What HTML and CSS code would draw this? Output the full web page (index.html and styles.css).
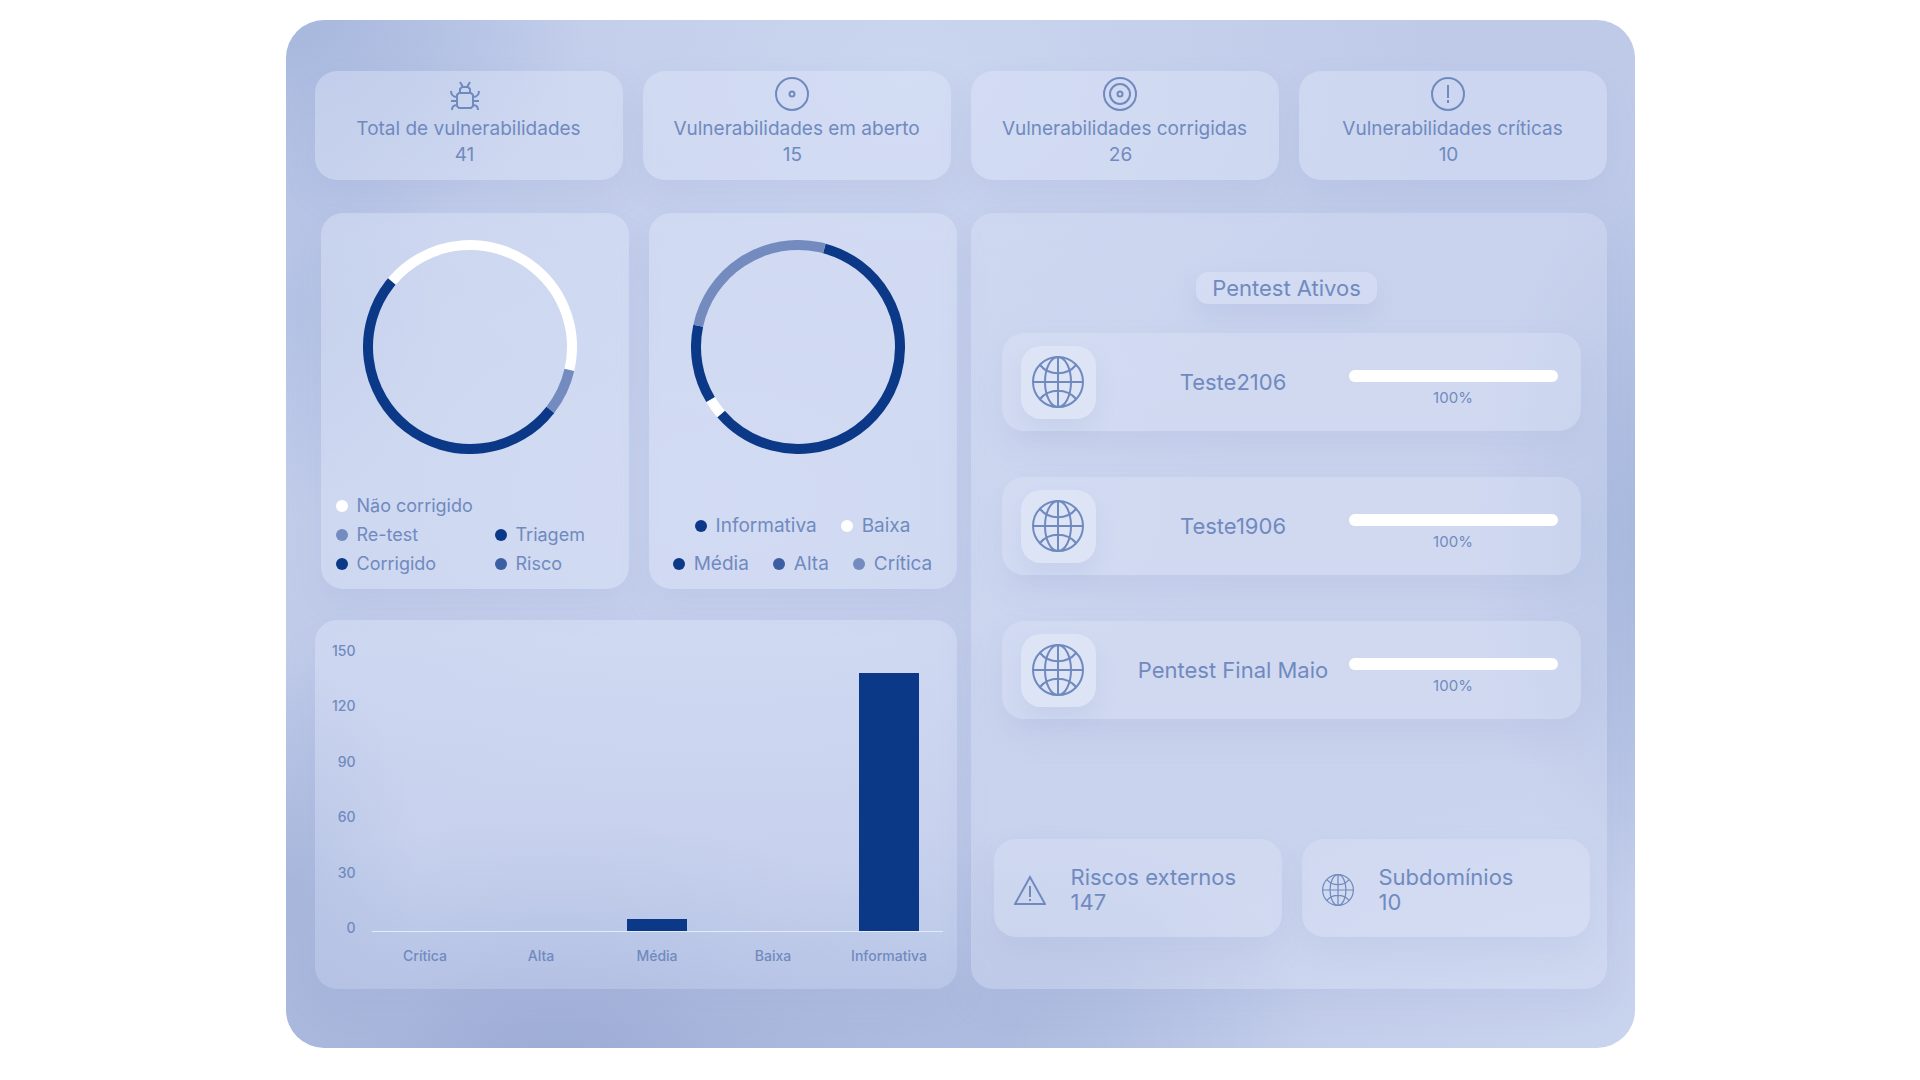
FILE: index.html
```html
<!DOCTYPE html>
<html lang="pt-BR">
<head>
    <meta charset="UTF-8">
    <meta name="viewport" content="width=device-width, initial-scale=1.0">
    <title>Dashboard</title>
    <link rel="stylesheet" href="styles.css">
</head>
<body>
    <svg class="sprite" aria-hidden="true">
        <symbol id="globe" viewBox="0 0 52 52">
            <circle cx="26" cy="26" r="25"/>
            <ellipse cx="26" cy="26" rx="13" ry="25"/>
            <path d="M26 1v50M1 26h50M8 9c9 11 27 11 36 0M8 43c9-11 27-11 36 0"/>
        </symbol>
    </svg>

    <main class="dashboard">
        <section class="stats">
            <div class="card stat">
                <svg class="stat-icon" viewBox="0 0 34 34">
                    <path d="M12 16h12l2 2v11l-2 2H12l-2-2V18zM13 16v-4l2-2h6l2 2v4M16 10l-3-5M20 10l3-5M10 20c-4 0-6-3-6-6M26 20c4 0 6-3 6-6M10 24H4M26 24h6M10 28c-4 0-5 2-5 5M26 28c4 0 5 2 5 5"/>
                </svg>
                <h2>Total de vulnerabilidades</h2>
                <p>41</p>
            </div>
            <div class="card stat">
                <svg class="stat-icon" viewBox="0 0 34 34">
                    <circle cx="17" cy="17" r="16"/>
                    <circle cx="17" cy="17" r="2.5"/>
                </svg>
                <h2>Vulnerabilidades em aberto</h2>
                <p>15</p>
            </div>
            <div class="card stat">
                <svg class="stat-icon" viewBox="0 0 34 34">
                    <circle cx="17" cy="17" r="16"/>
                    <circle cx="17" cy="17" r="10"/>
                    <circle cx="17" cy="17" r="2.5"/>
                </svg>
                <h2>Vulnerabilidades corrigidas</h2>
                <p>26</p>
            </div>
            <div class="card stat">
                <svg class="stat-icon" viewBox="0 0 34 34">
                    <circle cx="17" cy="17" r="16"/>
                    <path d="M17 8v13M17 23v3" stroke-width="2"/>
                </svg>
                <h2>Vulnerabilidades críticas</h2>
                <p>10</p>
            </div>
        </section>

        <div class="content">
            <div class="charts">
                <div class="donuts">
                    <section class="card donut-card">
                        <svg class="donut" viewBox="0 0 214 214">
                            <circle class="seg white" cx="107" cy="107" r="102" pathLength="360" stroke-dasharray="154 206" transform="rotate(-140 107 107)"/>
                            <circle class="seg light" cx="107" cy="107" r="102" pathLength="360" stroke-dasharray="25 335" transform="rotate(13 107 107)"/>
                            <circle class="seg dark" cx="107" cy="107" r="102" pathLength="360" stroke-dasharray="182 178" transform="rotate(38 107 107)"/>
                        </svg>
                        <ul class="legend legend-status">
                            <li class="wide"><span class="dot white"></span>Não corrigido</li>
                            <li><span class="dot light"></span>Re-test</li>
                            <li><span class="dot dark"></span>Triagem</li>
                            <li><span class="dot dark"></span>Corrigido</li>
                            <li><span class="dot medium"></span>Risco</li>
                        </ul>
                    </section>
                    <section class="card donut-card">
                        <svg class="donut" viewBox="0 0 214 214">
                            <circle class="seg dark" cx="107" cy="107" r="102" pathLength="360" stroke-dasharray="214 146" transform="rotate(-75 107 107)"/>
                            <circle class="seg white" cx="107" cy="107" r="102" pathLength="360" stroke-dasharray="10 350" transform="rotate(139 107 107)"/>
                            <circle class="seg dark" cx="107" cy="107" r="102" pathLength="360" stroke-dasharray="43 317" transform="rotate(149 107 107)"/>
                            <circle class="seg light" cx="107" cy="107" r="102" pathLength="360" stroke-dasharray="93 267" transform="rotate(192 107 107)"/>
                        </svg>
                        <div class="legend-group">
                            <ul class="legend legend-row">
                                <li><span class="dot dark"></span>Informativa</li>
                                <li><span class="dot white"></span>Baixa</li>
                            </ul>
                            <ul class="legend legend-row">
                                <li><span class="dot dark"></span>Média</li>
                                <li><span class="dot medium"></span>Alta</li>
                                <li><span class="dot light"></span>Crítica</li>
                            </ul>
                        </div>
                    </section>
                </div>

                <section class="card bar-chart">
                    <div class="y-axis">
                        <span>150</span>
                        <span>120</span>
                        <span>90</span>
                        <span>60</span>
                        <span>30</span>
                        <span>0</span>
                    </div>
                    <div class="plot">
                        <div class="bars">
                            <div class="bar" style="height: 0%"></div>
                            <div class="bar" style="height: 0%"></div>
                            <div class="bar" style="height: 4%"></div>
                            <div class="bar" style="height: 0%"></div>
                            <div class="bar" style="height: 89%"></div>
                        </div>
                        <div class="x-axis">
                            <span>Crítica</span>
                            <span>Alta</span>
                            <span>Média</span>
                            <span>Baixa</span>
                            <span>Informativa</span>
                        </div>
                    </div>
                </section>
            </div>

            <section class="card pentests">
                <h2 class="badge">Pentest Ativos</h2>
                <div class="pentest-list">
                    <article class="card pentest">
                        <div class="tile"><svg class="globe"><use href="#globe"/></svg></div>
                        <h3>Teste2106</h3>
                        <div class="progress">
                            <div class="track"><div class="fill" style="width: 100%"></div></div>
                            <span>100%</span>
                        </div>
                    </article>
                    <article class="card pentest">
                        <div class="tile"><svg class="globe"><use href="#globe"/></svg></div>
                        <h3>Teste1906</h3>
                        <div class="progress">
                            <div class="track"><div class="fill" style="width: 100%"></div></div>
                            <span>100%</span>
                        </div>
                    </article>
                    <article class="card pentest">
                        <div class="tile"><svg class="globe"><use href="#globe"/></svg></div>
                        <h3>Pentest Final Maio</h3>
                        <div class="progress">
                            <div class="track"><div class="fill" style="width: 100%"></div></div>
                            <span>100%</span>
                        </div>
                    </article>
                </div>
                <div class="totals">
                    <div class="card total">
                        <svg class="total-icon" viewBox="0 0 32 32">
                            <path d="M16 3L1 30h30zM16 12v11M16 25v2"/>
                        </svg>
                        <div>
                            <h3>Riscos externos</h3>
                            <p>147</p>
                        </div>
                    </div>
                    <div class="card total">
                        <svg class="total-icon"><use href="#globe"/></svg>
                        <div>
                            <h3>Subdomínios</h3>
                            <p>10</p>
                        </div>
                    </div>
                </div>
            </section>
        </div>
    </main>
</body>
</html>
```

FILE: styles.css
```css
* {
    margin: 0;
    padding: 0;
    box-sizing: border-box;
}

body {
    font-family: Inter, "Liberation Sans", sans-serif;
    background: #fff;
    color: #708abf;
    padding: 20px;
}

h2,
h3 {
    font-weight: 400;
}

svg {
    fill: none;
    stroke: #708abf;
    stroke-width: 2;
    flex-shrink: 0;
}

.sprite {
    display: none;
}

.dashboard {
    max-width: 1349px;
    margin: 0 auto;
    padding: 51px 28px 59px 29px;
    border-radius: 38px;
    background:
        radial-gradient(ellipse 36% 26% at 20% 104%, #98a8d3, rgba(152, 168, 211, 0)),
        radial-gradient(ellipse 22% 22% at 0% 0%, #a6b7dd, rgba(166, 183, 221, 0)),
        radial-gradient(ellipse 14% 36% at 102% 50%, #a6b7dd, rgba(166, 183, 221, 0)),
        radial-gradient(ellipse 12% 20% at 0% 28%, #b4c2e4, rgba(180, 194, 228, 0)),
        radial-gradient(ellipse 10% 22% at 0% 84%, #a8b7dc, rgba(168, 183, 220, 0)),
        radial-gradient(ellipse 22% 20% at 54% 98%, #acbbdf, rgba(172, 187, 223, 0)),
        radial-gradient(ellipse 40% 40% at 46% 5%, #cad5ef, rgba(202, 213, 239, 0)),
        radial-gradient(ellipse 40% 30% at 100% 100%, #c9d4ee, rgba(201, 212, 238, 0)),
        radial-gradient(ellipse 40% 34% at 32% 46%, #c8d3ee, rgba(200, 211, 238, 0)),
        #bfcae9;
}

.card {
    border-radius: 22px;
    background: rgba(225, 232, 250, 0.4);
    box-shadow: 0 16px 32px rgba(140, 158, 208, 0.14);
}

/* Cards do topo */
.stats {
    display: grid;
    grid-template-columns: repeat(4, 1fr);
    gap: 20px;
}

.stat {
    display: flex;
    flex-direction: column;
    align-items: center;
    padding: 6px 8px 12px;
}

.stat-icon {
    width: 34px;
    height: 34px;
    margin-right: 10px;
}

.stat h2,
.stat p {
    font-size: 19px;
    line-height: 26px;
}

.stat h2 {
    margin-top: 5px;
}

.stat p {
    margin-right: 8px;
}

.content {
    display: grid;
    grid-template-columns: minmax(0, 642fr) minmax(0, 636fr);
    gap: 14px;
    margin-top: 33px;
}

.charts {
    display: flex;
    flex-direction: column;
    gap: 31px;
}

.donuts {
    display: grid;
    grid-template-columns: 1fr 1fr;
    gap: 20px;
    padding-left: 6px;
}

.donut-card {
    height: 376px;
    padding: 27px 14px 11px;
    display: flex;
    flex-direction: column;
    justify-content: space-between;
}

.donut {
    width: 214px;
    height: 214px;
    align-self: center;
    margin-right: 10px;
}

.seg {
    stroke-width: 10;
}

.seg.white {
    stroke: #fff;
}

.seg.light {
    stroke: #738bbf;
}

.seg.dark {
    stroke: #0b3987;
}

.legend {
    list-style: none;
    font-size: 19px;
    line-height: 29px;
}

.legend li {
    display: flex;
    align-items: center;
    gap: 9px;
}

.legend-status {
    display: grid;
    grid-template-columns: 159px 1fr;
    padding-left: 1px;
    font-size: 18px;
}

.wide {
    grid-column: 1 / -1;
}

.legend-group {
    display: flex;
    flex-direction: column;
    gap: 9px;
}

.legend-row {
    display: flex;
    justify-content: center;
    gap: 24px;
}

.dot {
    width: 12px;
    height: 12px;
    border-radius: 50%;
    flex-shrink: 0;
}

.dot.white {
    background: #fff;
}

.dot.light {
    background: #738bbf;
}

.dot.medium {
    background: #3c5fa3;
}

.dot.dark {
    background: #0b3987;
}

/* Gráfico de barras */
.bar-chart {
    height: 369px;
    display: flex;
    gap: 16px;
    padding: 21px 14px 22px 12px;
    font-size: 14px;
    font-weight: 500;
    line-height: 20px;
    background: linear-gradient(rgba(225, 232, 250, 0.4), rgba(208, 219, 245, 0.3));
}

.y-axis {
    width: 29px;
    height: 297px;
    display: flex;
    flex-direction: column;
    justify-content: space-between;
    text-align: right;
}

.plot {
    flex: 1;
    min-width: 0;
}

.bars,
.x-axis {
    display: grid;
    grid-template-columns: repeat(5, 116px);
    justify-content: center;
}

.bars {
    align-items: end;
    justify-items: center;
    height: 291px;
    border-bottom: 1px solid #e3eafa;
}

.bar {
    width: 60px;
    background: #0b3987;
}

.x-axis {
    margin-top: 14px;
    text-align: center;
}

/* Painel de pentests */
.pentests {
    display: flex;
    flex-direction: column;
    padding: 59px 17px 52px 23px;
}

.pentests,
.pentests .card {
    background: rgba(225, 232, 250, 0.3);
}

.badge {
    align-self: center;
    margin-right: 10px;
    padding: 0 16px;
    border-radius: 12px;
    font-size: 22px;
    line-height: 32px;
    background: rgba(225, 232, 250, 0.4);
    box-shadow: 0 12px 24px rgba(140, 158, 208, 0.2);
}

.pentest-list {
    display: flex;
    flex-direction: column;
    gap: 46px;
    padding: 29px 9px 0 8px;
}

.pentest {
    display: flex;
    align-items: center;
    height: 98px;
    padding: 0 23px 0 19px;
}

.tile {
    display: flex;
    align-items: center;
    justify-content: center;
    width: 75px;
    height: 73px;
    border-radius: 20px;
    background: #dde4f6;
    box-shadow: 0 12px 20px rgba(140, 158, 208, 0.15);
}

.globe {
    width: 52px;
    height: 52px;
}

.pentest h3 {
    flex: 1;
    padding-left: 22px;
    text-align: center;
    font-size: 22px;
}

.progress {
    width: 209px;
    padding-top: 14px;
    text-align: center;
    font-size: 15px;
    line-height: 20px;
}

.track {
    height: 12px;
    margin-bottom: 6px;
    border-radius: 6px;
    background: rgba(255, 255, 255, 0.3);
}

.fill {
    height: 100%;
    border-radius: 6px;
    background: #fff;
}

.totals {
    display: grid;
    grid-template-columns: 1fr 1fr;
    gap: 20px;
    margin-top: auto;
}

.total {
    display: flex;
    align-items: center;
    gap: 25px;
    height: 98px;
    padding: 4px 20px 0;
}

.total h3,
.total p {
    font-size: 22px;
    line-height: 25px;
}

.total-icon {
    width: 32px;
    height: 32px;
}
```
